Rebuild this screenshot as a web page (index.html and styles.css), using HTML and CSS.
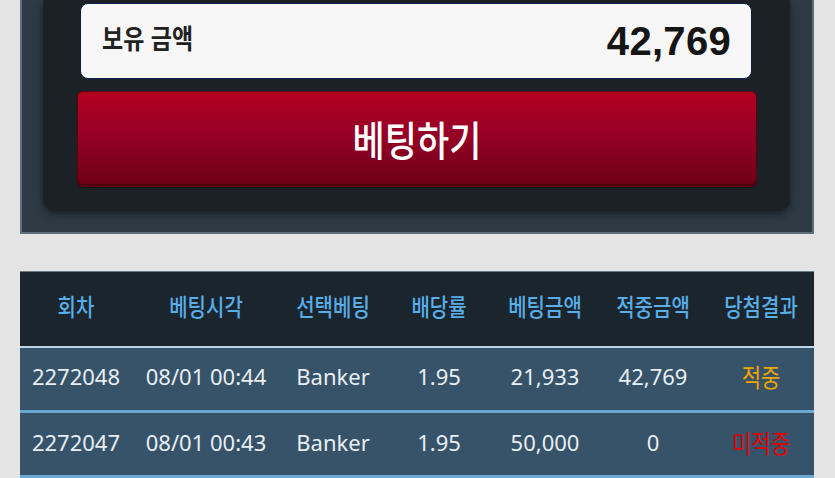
FILE: index.html
```html
<!DOCTYPE html>
<html lang="ko">
<head>
<meta charset="utf-8">
<link rel="stylesheet" href="styles.css">
</head>
<body>
<div class="page">
  <section class="panel">
    <div class="inner">
      <div class="balance">
        <span class="balance-label tall">보유 금액</span>
        <span class="balance-value">42,769</span>
      </div>
      <button class="bet-btn"><span class="tall">베팅하기</span></button>
    </div>
  </section>

  <table class="history">
    <colgroup>
      <col class="c1"><col class="c2"><col class="c3"><col class="c4"><col class="c5"><col class="c6"><col class="c7">
    </colgroup>
    <thead>
      <tr>
        <th><span class="tall">회차</span></th>
        <th><span class="tall">베팅시각</span></th>
        <th><span class="tall">선택베팅</span></th>
        <th><span class="tall">배당률</span></th>
        <th><span class="tall">베팅금액</span></th>
        <th><span class="tall">적중금액</span></th>
        <th><span class="tall">당첨결과</span></th>
      </tr>
    </thead>
    <tbody>
      <tr>
        <td>2272048</td><td>08/01 00:44</td><td>Banker</td><td>1.95</td><td>21,933</td><td>42,769</td><td class="win"><span class="tall">적중</span></td>
      </tr>
      <tr>
        <td>2272047</td><td>08/01 00:43</td><td>Banker</td><td>1.95</td><td>50,000</td><td>0</td><td class="lose"><span class="tall">미적중</span></td>
      </tr>
    </tbody>
  </table>
</div>
</body>
</html>
```

FILE: styles.css
```css
* { box-sizing: border-box; }
html, body { margin: 0; padding: 0; }
body {
  background: #e4e4e4;
  width: 835px;
  height: 478px;
  overflow: hidden;
  font-family: "Noto Sans", "Noto Sans CJK KR", sans-serif;
}
.tall {
  display: inline-block;
  transform: scaleY(1.17);
}
.page {
  margin-left: 20px;
  width: 794px;
}
.panel {
  background: #2e3a44;
  border-left: 2px solid #5b6f7d;
  border-right: 2px solid #5b6f7d;
  border-bottom: 2px solid #5b6f7d;
  padding: 0 22px 21px 21px;
}
.inner {
  background: #1b2125;
  height: 211px;
  border-radius: 0 0 12px 12px;
  box-shadow: 0 3px 8px rgba(0,0,0,0.45);
  padding: 3px 33px 0 34px;
  display: flex;
  flex-direction: column;
}
.balance {
  margin: 0 5px 0 3px;
  height: 76px;
  background: #f7f7f7;
  border: 1px solid #0d1d4c;
  border-radius: 8px;
  display: flex;
  align-items: center;
  justify-content: space-between;
  padding: 0 20px 0 21px;
}
.balance-label {
  font-family: "Noto Sans CJK KR", sans-serif;
  font-weight: 700;
  font-size: 23px;
  color: #222;
  margin-top: -8px;
}
.balance-value {
  font-family: "Liberation Sans", Arial, sans-serif;
  font-weight: 700;
  font-size: 40px;
  color: #151515;
  letter-spacing: 0.3px;
}
.bet-btn {
  margin-top: 12px;
  height: 96px;
  width: 100%;
  border: 1px solid #5c0010;
  border-radius: 6px;
  background: linear-gradient(to bottom, #b3001f 0%, #9a0026 40%, #6c0015 100%);
  box-shadow: inset 0 -2px 0 rgba(60,0,10,0.6), 0 1px 0 rgba(0,0,0,0.4);
  color: #fff;
  font-family: "Noto Sans CJK KR", sans-serif;
  font-weight: 500;
  font-size: 35px;
  cursor: pointer;
  padding: 0 0 4px 0;
}
.history {
  margin-top: 37px;
  width: 794px;
  border-collapse: collapse;
  table-layout: fixed;
  border-top: 1px solid #6c7880;
}
.c1 { width: 112px; }
.c2 { width: 148px; }
.c3 { width: 106px; }
.c4 { width: 106px; }
.c5 { width: 106px; }
.c6 { width: 110px; }
.c7 { width: 106px; }
.history thead tr {
  background: #1b252e;
  height: 75px;
  border-bottom: 2px solid #bcd4e6;
}
.history th {
  font-family: "Noto Sans CJK KR", sans-serif;
  font-weight: 500;
  font-size: 20px;
  color: #58aee8;
  text-align: center;
  padding: 0 0 5px 0;
  white-space: nowrap;
}
.history tbody tr {
  background: #36536a;
  height: 65px;
  border-bottom: 3px solid #6aaad2;
}
.history td {
  font-size: 22px;
  color: #e9eef2;
  text-align: center;
  padding: 0 0 5px 0;
  white-space: nowrap;
}
.history td.win { color: #f2a400; font-family: "Noto Sans CJK KR", sans-serif; font-size: 21px; }
.history td.lose { color: #e20000; font-family: "Noto Sans CJK KR", sans-serif; font-size: 21px; }
```
